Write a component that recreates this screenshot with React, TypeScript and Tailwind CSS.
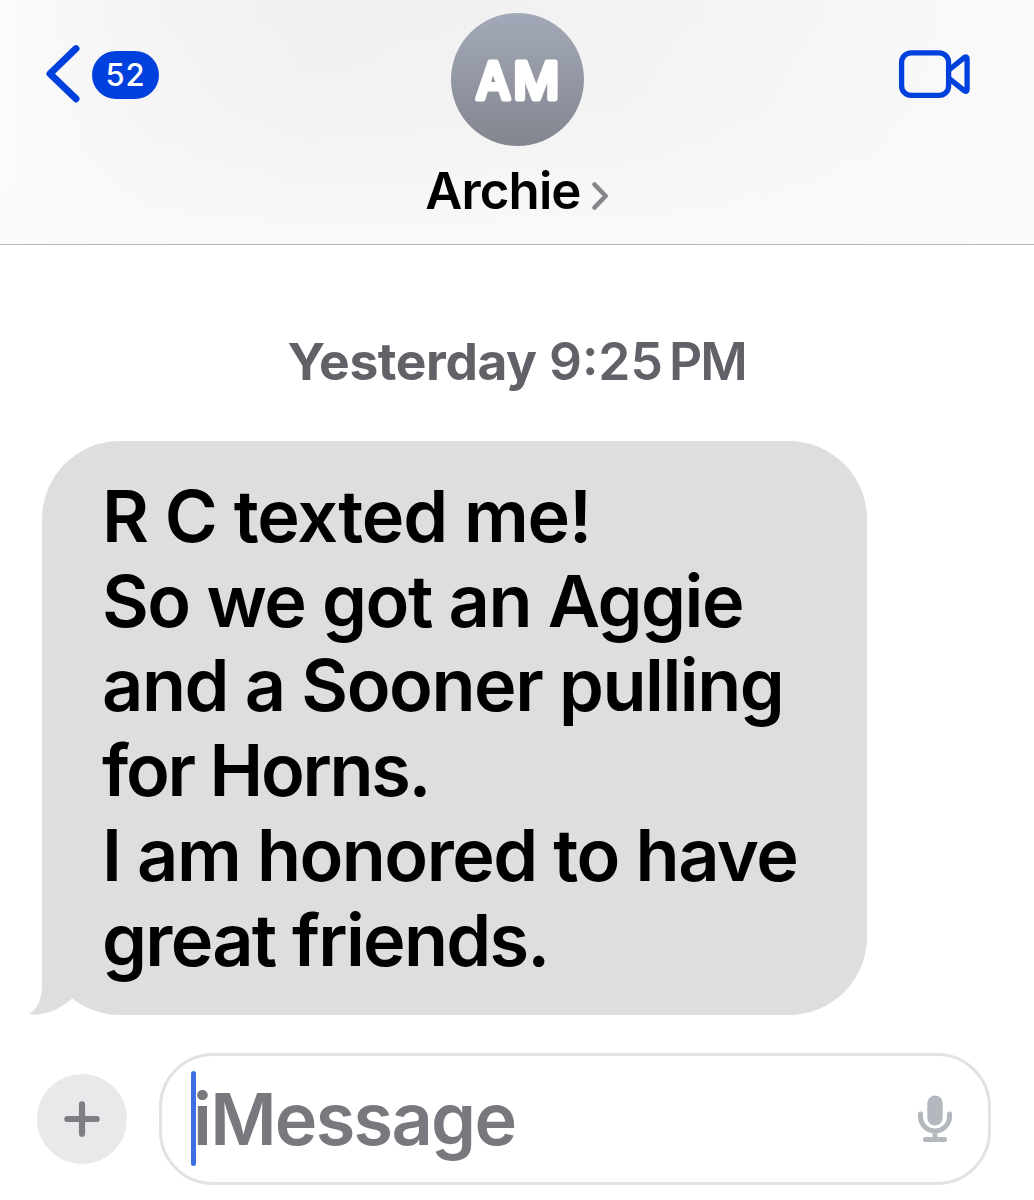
import React from 'react';

const lines = [
  { words: 'R C texted me!', cls: 'tracking-[-1.15px]' },
  { words: 'So we got an Aggie', cls: 'tracking-[-1.5px] [word-spacing:0.1px]' },
  { words: 'and a Sooner pulling', cls: 'tracking-[-1.45px]' },
  { words: 'for Horns.', cls: 'tracking-[-2.3px]' },
  { words: 'I am honored to have', cls: 'tracking-[-1.5px]' },
  { words: 'great friends.', cls: 'tracking-[-1.7px]' },
];

function Header() {
  return (
    <header className="flex h-[245px] items-start justify-between border-b border-[#b9b9bb] bg-[linear-gradient(to_bottom,rgba(250,250,251,0)_0%,rgba(250,250,251,0.2)_45%,rgba(250,250,251,0.9)_100%),linear-gradient(to_right,#fbfbfc_0%,#f4f4f5_14%,#f0f0f1_30%,#f2f2f3_60%,#f6f6f7_80%,#fafafa_100%)]">
      <button className="flex w-[300px] items-center gap-[12px] pt-[44px] pl-[44px] text-[#0040dd]" aria-label="Back">
        <svg width="36" height="60" viewBox="0 0 36 60" fill="none" stroke="currentColor" strokeWidth="7" strokeLinecap="round" strokeLinejoin="round">
          <path d="M32 4.600 6 29.700l26 25.100" />
        </svg>
        <span className="mt-[1px] flex h-[48px] w-[67px] items-center justify-center rounded-full bg-[#0040dd] text-[31px] leading-[48px] font-medium tracking-[0.8px] text-white">
          52
        </span>
      </button>
      <div className="flex flex-col items-center pt-[13px]">
        <div className="size-[133px] rounded-full bg-linear-to-b from-[#a3a9b8] to-[#83868f]">
          <svg width="133" height="133" viewBox="0 0 133 133" fontFamily="Inter" fontWeight="500" fontSize="51" fill="#fff" stroke="#fff" strokeWidth="4.800" strokeLinejoin="round" strokeLinecap="round" textAnchor="middle">
            <text x="42.300" y="86" textLength="34.500" lengthAdjust="spacingAndGlyphs">A</text>
            <text x="85.300" y="86" textLength="46" lengthAdjust="spacingAndGlyphs">M</text>
          </svg>
        </div>
        <div className="mt-[15px] flex items-center gap-[10px] text-[51px] leading-[60px] font-semibold tracking-[-0.9px] text-black">
          <span>Archie</span>
          <svg className="mt-[9px]" width="18" height="30" viewBox="0 0 18 30" fill="none" stroke="#85858a" strokeWidth="4.6" strokeLinecap="round" strokeLinejoin="round">
            <path d="M3.500 3.500 14.700 15 3.500 26.500" />
          </svg>
        </div>
      </div>
      <button className="flex w-[300px] justify-end pt-[47px] pr-[62px] text-[#0040dd]" aria-label="Video call">
        <svg width="74" height="54" viewBox="0 0 74 54" fill="none" stroke="currentColor" strokeWidth="5.3" strokeLinejoin="round">
          <rect x="3.600" y="5.900" width="47" height="42.500" rx="9.500" />
          <path d="M50.600 23.200 66.500 10.400q2.600-1.200 2.600 1.400v30.700q0 2.600-2.600 1.400L50.600 31.100" />
        </svg>
      </button>
    </header>
  );
}

function Bubble() {
  return (
    <div className="relative mt-[50px] ml-[42px] h-[574px] w-[825px] rounded-[78px] bg-[#dedee0] pt-[32.8px] pl-[60px]">
      <svg className="absolute bottom-0 -left-[13px]" width="64" height="85" viewBox="0 0 64 85" fill="#dedee0">
        <path d="M13 0V55C13 70 8 79 0 84C15 86.500 30 79.500 42 69.500L60 50V0Z" />
      </svg>
      <div className="relative text-[72px] leading-[84.8px] font-semibold whitespace-nowrap text-black">
        {lines.map((line) => (
          <p key={line.words} className={line.cls}>{line.words}</p>
        ))}
      </div>
    </div>
  );
}

function Composer() {
  return (
    <div className="mt-[38px] flex items-center pl-[37px]">
      <button className="flex size-[90px] items-center justify-center rounded-full bg-[#e8e9eb]" aria-label="Add">
        <svg width="36" height="36" viewBox="0 0 36 36" fill="none" stroke="#7e7e83" strokeWidth="6.2" strokeLinecap="round">
          <path d="M18 3.300v29.400M3.300 18h29.400" />
        </svg>
      </button>
      <div className="ml-[32px] flex h-[132px] w-[832px] items-center justify-between rounded-[54px] border-[3px] border-[#e2e2e4] bg-white pr-[36px] pl-[30px]">
        <div className="relative -mt-[2px] flex">
          <span className="absolute top-0 -left-[1px] h-[95px] w-[5px] rounded-full bg-[#3b6fe3]" />
          <span className="pl-[1px] text-[72px] leading-[95px] font-semibold tracking-[-1.7px] text-[#78787e]">iMessage</span>
        </div>
        <svg width="36" height="48" viewBox="0 0 36 48" fill="none" stroke="#b3b7be" strokeWidth="5" strokeLinecap="round">
          <rect x="11.300" y="0.500" width="15.400" height="30" rx="7.700" fill="#b3b7be" stroke="none" />
          <path d="M4.500 19v2.500a14.500 14.500 0 0 0 29 0V19M19 36v8M9.500 44.500h19" />
        </svg>
      </div>
    </div>
  );
}

export default function App() {
  return (
    <main className="h-[1200px] w-[1034px] overflow-hidden bg-white font-['Inter',sans-serif]">
      <Header />
      <div className="flex pt-[86px] pl-[287.5px] text-[51.5px] leading-[60px] font-semibold whitespace-nowrap text-[#626167]">
        <span className="w-[261.5px] font-bold tracking-[-0.4px]">Yesterday</span>
        <span className="w-[120px]">9:25</span>
        <span className="tracking-[-2px]">PM</span>
      </div>
      <Bubble />
      <Composer />
    </main>
  );
}
